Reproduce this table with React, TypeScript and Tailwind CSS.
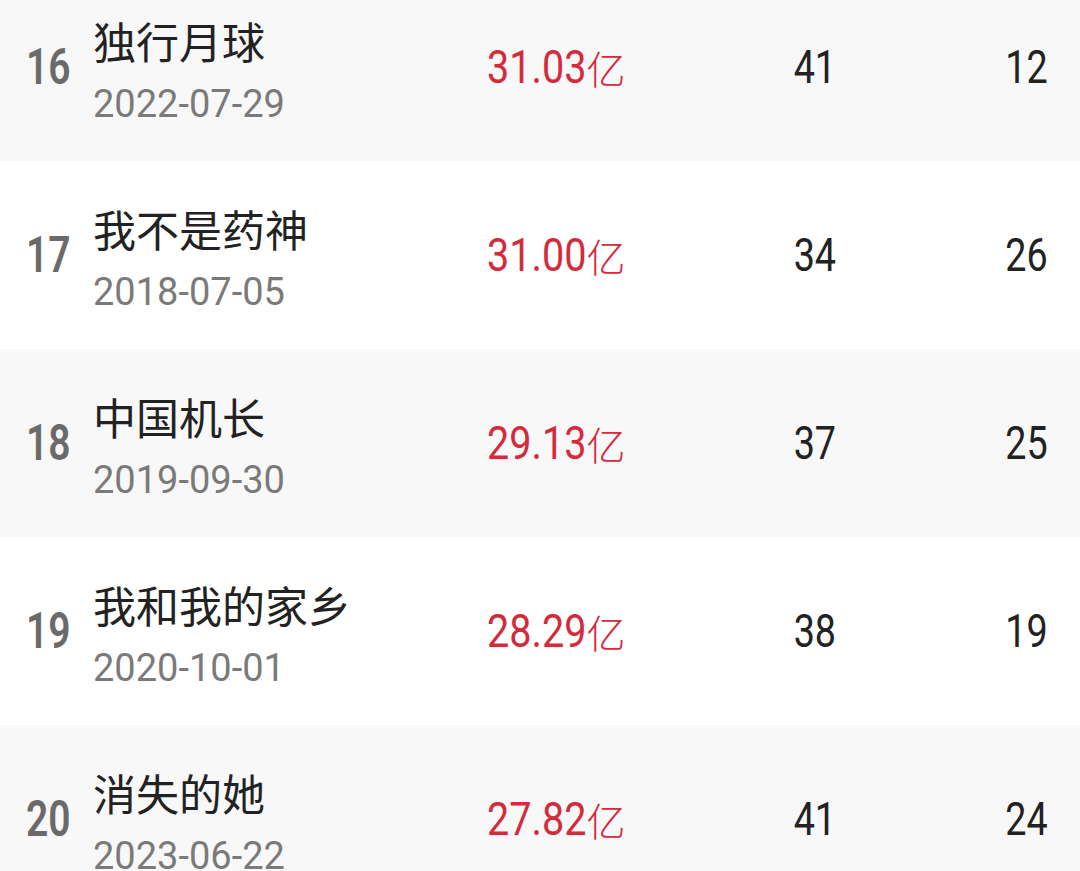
import React from "react";

const rows = [
  { rank: 16, title: "独行月球", date: "2022-07-29", amount: "31.03", a: "41", b: "12" },
  { rank: 17, title: "我不是药神", date: "2018-07-05", amount: "31.00", a: "34", b: "26" },
  { rank: 18, title: "中国机长", date: "2019-09-30", amount: "29.13", a: "37", b: "25" },
  { rank: 19, title: "我和我的家乡", date: "2020-10-01", amount: "28.29", a: "38", b: "19" },
  { rank: 20, title: "消失的她", date: "2023-06-22", amount: "27.82", a: "41", b: "24" },
];

export default function App() {
  return (
    <div className="h-[871px] w-[1080px] overflow-hidden bg-white">
      <div className="-mt-[27px] flex flex-col">
        {rows.map((r, i) => (
          <div
            key={r.rank}
            className={`flex h-[188px] items-center ${i % 2 === 0 ? "bg-[#f8f8f8]" : "bg-white"}`}
          >
            <div className="w-[93px] pl-[26px]">
              <span className="inline-block origin-left scale-x-[0.78] font-['Roboto',sans-serif] text-[50px] leading-[50px] font-semibold text-[#6a6a6a]">
                {r.rank}
              </span>
            </div>
            <div className="flex w-[394px] flex-col gap-[16px] pt-[5px]">
              <div className="font-['Noto_Sans_CJK_SC','Noto_Sans',sans-serif] text-[43px] leading-[52px] text-[#222222]">
                {r.title}
              </div>
              <div className="font-['Roboto','Noto_Sans',sans-serif] text-[38px] leading-[44px] text-[#7a7a7a]">
                {r.date}
              </div>
            </div>
            <div className="flex w-[250px] items-center text-[#d42b3c]">
              <span className="mr-[-16px] inline-block origin-left scale-x-[0.86] font-['Roboto',sans-serif] text-[46px] leading-[50px]">
                {r.amount}
              </span>
              <span className="font-['Noto_Sans_CJK_SC',sans-serif] text-[39px] leading-[50px] font-light">
                亿
              </span>
            </div>
            <div className="w-[156px] text-center">
              <span className="inline-block origin-center scale-x-[0.82] font-['Roboto',sans-serif] text-[46px] leading-[50px] text-[#222222]">
                {r.a}
              </span>
            </div>
            <div className="flex-1 pr-[32px] text-right">
              <span className="inline-block origin-right scale-x-[0.82] font-['Roboto',sans-serif] text-[46px] leading-[50px] text-[#222222]">
                {r.b}
              </span>
            </div>
          </div>
        ))}
      </div>
    </div>
  );
}
